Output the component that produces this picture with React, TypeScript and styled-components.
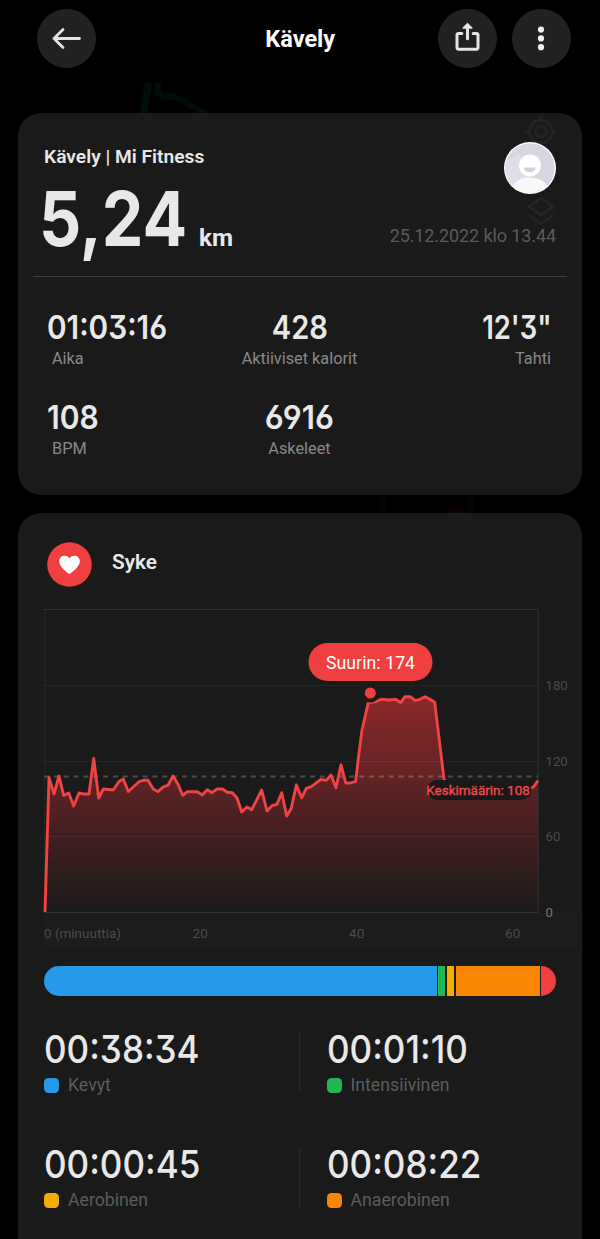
import React from "react";
import styled, { createGlobalStyle } from "styled-components";

const GlobalStyle = createGlobalStyle`
  * { box-sizing: border-box; }
  body { margin: 0; background: #000; font-family: Roboto, sans-serif; color: #e8e8e8; }
`;

const Screen = styled.div`
  position: relative;
  width: 600px;
  height: 1239px;
  overflow: hidden;
  background: #000;
`;

const MapTrace = styled.svg`
  position: absolute;
  inset: 0;
`;

const Header = styled.header`
  position: relative;
  height: 113px;
  padding: 9px 29.5px 0 37px;
  display: grid;
  grid-template-columns: 133px 1fr 133px;
  align-items: start;
`;

const HeaderActions = styled.div`
  display: flex;
  gap: 15px;
`;

const RoundButton = styled.button`
  width: 59px;
  height: 59px;
  padding: 0;
  border: 0;
  border-radius: 50%;
  background: #212121;
  display: block;
`;

const Title = styled.h1`
  margin: 0;
  padding-right: 7px;
  font-size: 23.5px;
  line-height: 60px;
  font-weight: 700;
  color: #fff;
  text-align: center;
`;

const Card = styled.section<{ $height: number }>`
  position: relative;
  margin: 0 18px 18px;
  height: ${(p) => p.$height}px;
  border-radius: 23px;
  background: #1a1a1a;
`;

const GhostControls = styled.svg`
  position: absolute;
  left: 505px;
  top: 0;
`;

const SummaryHead = styled.div`
  position: relative;
  display: flex;
  justify-content: space-between;
  height: 164px;
  margin: 0 15px;
  padding: 29px 11px 0;
  border-bottom: 1px solid #3a3a3a;
`;

const Source = styled.div`
  padding-top: 1px;
  font-size: 19.2px;
  line-height: 28px;
  font-weight: 600;
`;

const Distance = styled.div`
  display: flex;
  align-items: baseline;
  height: 90px;
  line-height: 94px;
  margin-left: -5px;
`;

const Digits = styled.span<{ $size: number; $weight: number; $stretch: number; $origin?: string }>`
  display: inline-block;
  font-family: Inter, sans-serif;
  font-feature-settings: "cv09", "cv03", "cv04";
  font-size: ${(p) => p.$size}px;
  font-weight: ${(p) => p.$weight};
  white-space: nowrap;
  transform: scaleX(${(p) => p.$stretch});
  transform-origin: ${(p) => p.$origin ?? "left"} center;
`;

const DistanceValue = styled.div`
  width: 160px;
`;

const Unit = styled.span`
  font-size: 24.3px;
  font-weight: 700;
`;

const Meta = styled.div`
  display: flex;
  flex-direction: column;
  align-items: flex-end;
  gap: 29px;
`;

const DateText = styled.div`
  font-size: 18px;
  line-height: 26px;
  letter-spacing: -0.1px;
  color: #5b5b5b;
`;

const Stats = styled.div`
  display: grid;
  grid-template-columns: 1fr 1fr 1fr;
  row-gap: 24px;
  padding: 30px 30px 0 29px;
`;

const Stat = styled.div<{ $align: string }>`
  height: 66px;
  text-align: ${(p) => p.$align};
  line-height: 40px;
`;

const StatLabel = styled.div<{ $inset: string }>`
  margin-top: -6px;
  padding: ${(p) => p.$inset};
  font-size: 16.3px;
  line-height: 22px;
  color: #898989;
  white-space: nowrap;
`;

const HeartHead = styled.div`
  display: flex;
  align-items: center;
  gap: 20px;
  padding: 29px 29px 0;
  height: 74px;
`;

const HeartBadge = styled.svg`
  display: block;
  flex: none;
`;

const SectionTitle = styled.h2`
  margin: 0 0 5px;
  font-size: 20.8px;
  font-weight: 600;
`;

const Chart = styled.svg`
  display: block;
  margin-top: 22px;
  font-family: Roboto, sans-serif;
`;

const ZoneBar = styled.div`
  display: flex;
  gap: 1.4px;
  height: 29.5px;
  margin: 18px 26px 0;
  border-radius: 15px;
  overflow: hidden;
`;

const ZoneSegment = styled.div<{ $color: string; $width: number }>`
  width: ${(p) => p.$width}px;
  background: ${(p) => p.$color};
`;

const Zones = styled.div`
  display: grid;
  grid-template-columns: 256px 1fr;
  row-gap: 49px;
  margin: 31.5px 26px 0;
`;

const Zone = styled.div<{ $divided: boolean }>`
  height: 66px;
  line-height: 44px;
  padding-left: ${(p) => (p.$divided ? 0 : 26.5)}px;
  background: ${(p) => (p.$divided ? "linear-gradient(#292929, #292929) right 5px / 1px 60px no-repeat" : "none")};
`;

const ZoneLabel = styled.div`
  display: flex;
  align-items: center;
  gap: 9px;
  height: 22px;
  margin-top: -6px;
  font-size: 17.7px;
  line-height: 22px;
  color: #5d5d5d;
`;

const Swatch = styled.span<{ $color: string }>`
  width: 15px;
  height: 15px;
  border-radius: 4.5px;
  background: ${(p) => p.$color};
`;

const stats = [
  { value: "01:03:16", label: "Aika", align: "left", stretch: 0.9 },
  { value: "428", label: "Aktiiviset kalorit", align: "center", stretch: 0.88 },
  { value: "12'3\"", label: "Tahti", align: "right", stretch: 0.83 },
  { value: "108", label: "BPM", align: "left", stretch: 0.91 },
  { value: "6916", label: "Askeleet", align: "center", stretch: 0.95 },
];

const labelInset: Record<string, string> = {
  left: "0 0 0 5px",
  center: "0",
  right: "0 1px 0 0",
};

const zones = [
  { value: "00:38:34", label: "Kevyt", color: "#2699e8" },
  { value: "00:01:10", label: "Intensiivinen", color: "#1fb855" },
  { value: "00:00:45", label: "Aerobinen", color: "#f2ad00" },
  { value: "00:08:22", label: "Anaerobinen", color: "#fa8500" },
];

const segments = [
  { color: "#2699e8", width: 392.6 },
  { color: "#1fb855", width: 7.4 },
  { color: "#f2ad00", width: 7.6 },
  { color: "#fa8500", width: 83.9 },
  { color: "#f03f40", width: 14.9 },
];

const pulse =
  "45,912 49,777.5 54,794 59,776 63.7,795.5 68.7,793 73.7,806 79,793 83.7,794 89,794 93.7,758.5 98.7,798 103.3,789 113.3,790 119,781.5 123.3,779 128.3,791.5 139,781.7 143.3,780.3 148,780.3 153.3,789 158,791.7 163.7,786.7 168,785.3 173,776 178,784.3 182.7,795.3 187.3,791.7 197.3,791.7 202.3,795 207.3,789.7 212,792.7 217,789 222.3,789 227.3,792.3 232.3,792.7 237,798 241.7,812 247,807 251.7,809.7 261.7,790 267,811 272,805.7 277,804.3 281.7,792.7 286.7,816 291.3,808.3 296.3,785 301.7,797.7 306.3,788.3 311.3,786.7 321,779.3 326.3,780.3 331,775 336,787.7 341,764.7 345.7,783 350.7,783 355.7,781.3 358.5,757 362,730 368.3,702.7 376,701.5 381,699.3 390,700 395.7,699.3 400.7,702.7 405,696.7 410.3,696.7 415.3,700.7 420,699.3 425,696.7 430,699.3 434.7,702.3 444,779 450,790 526,790 533.5,787 538,780.5";

function HeartRateChart() {
  return (
    <Chart width="564" height="339" viewBox="18 609 564 339">
      <defs>
        <linearGradient id="fill" gradientUnits="userSpaceOnUse" x1="0" y1="697" x2="0" y2="912">
          <stop offset="0" stopColor="#ee3338" stopOpacity="0.54" />
          <stop offset="1" stopColor="#ee3338" stopOpacity="0" />
        </linearGradient>
      </defs>
      <rect x="44" y="913" width="538" height="35" fill="#1c1c1c" />
      <polygon points={`${pulse} 538,912`} fill="url(#fill)" />
      <g stroke="#fff" strokeOpacity="0.05" strokeWidth="1">
        <path d="M44 685.5H538M44 761.5H538M44 836.5H538" />
        <path d="M44.5 609V912" />
      </g>
      <path d="M44 609.5H538.2V912.5H44" fill="none" stroke="#323232" strokeWidth="1" />
      <path d="M44 776.5H538" stroke="#fff" strokeOpacity="0.22" strokeWidth="1.8" strokeDasharray="5 4.85" />
      <polyline points={pulse} fill="none" stroke="#ee4444" strokeWidth="2.9" strokeLinejoin="round" />
      <circle cx="370.3" cy="693" r="9.5" fill="#1a1a1a" />
      <circle cx="370.3" cy="693" r="5.5" fill="#f03f40" />
      <rect x="308.5" y="643" width="124" height="38" rx="19" fill="#f03f40" />
      <text x="370.5" y="669" fontSize="17.6" fill="#fff" textAnchor="middle" textLength="89">Suurin: 174</text>
      <rect x="427" y="780" width="104.5" height="20" rx="10" fill="#1a1919" />
      <text x="426.3" y="795" fontSize="13.4" fill="#f04a4a" stroke="#f04a4a" strokeWidth="0.35" textLength="103.5" lengthAdjust="spacingAndGlyphs">Keskimäärin: 108</text>
      <g fontSize="13.2" fill="#4b4b4b">
        <text x="545.5" y="689.7">180</text>
        <text x="545.5" y="765.5">120</text>
        <text x="545.5" y="841">60</text>
        <text x="545.5" y="917" fill="#777">0</text>
        <g fontSize="13.6">
          <text x="44" y="937.5" textLength="77" lengthAdjust="spacingAndGlyphs">0 (minuuttia)</text>
          <text x="192.5" y="937.5">20</text>
          <text x="349" y="937.5">40</text>
          <text x="505" y="937.5">60</text>
        </g>
      </g>
    </Chart>
  );
}

export default function App() {
  return (
    <Screen>
      <GlobalStyle />
      <MapTrace width="600" height="1239" fill="none">
        <path d="M149 82L143 114" stroke="#010f0a" strokeWidth="7" />
        <path d="M158 83V94L180 99L206 114" stroke="#010d09" strokeWidth="6" />
        <path d="M383 494V514M471 494V514" stroke="#010504" strokeWidth="6" />
        <circle cx="456" cy="517" r="11" fill="#0d0202" />
      </MapTrace>
      <Header>
        <RoundButton aria-label="Takaisin">
          <svg width="59" height="59" fill="none" stroke="#e2e2e2" strokeWidth="2.8" strokeLinecap="round" strokeLinejoin="round">
            <path d="M42.5 29.5H17M26 20.5L17 29.5L26 38.5" />
          </svg>
        </RoundButton>
        <Title>Kävely</Title>
        <HeaderActions>
          <RoundButton aria-label="Jaa">
            <svg width="59" height="59" fill="none" stroke="#e5e5e5" strokeWidth="3" strokeLinecap="round" strokeLinejoin="round">
              <path d="M23.8 24.4H20.6Q19 24.4 19 26V38.6Q19 40.2 20.6 40.2H38.4Q40 40.2 40 38.6V26Q40 24.4 38.4 24.4H35.2M29.5 29.7V16.5" />
              <path d="M25.2 19L29.5 14.7L33.8 19Z" fill="#e5e5e5" strokeWidth="1.6" />
            </svg>
          </RoundButton>
          <RoundButton aria-label="Lisää">
            <svg width="59" height="59" fill="#efefef">
              <circle cx="29" cy="20.6" r="3.1" />
              <circle cx="29" cy="29.4" r="3.1" />
              <circle cx="29" cy="38.2" r="3.1" />
            </svg>
          </RoundButton>
        </HeaderActions>
      </Header>

      <Card $height={382}>
        <GhostControls width="50" height="120" fill="none" stroke="#242424" strokeWidth="2.6">
          <circle cx="18" cy="18.5" r="11.5" />
          <circle cx="18" cy="18.5" r="5.5" />
          <path d="M18 3V8M18 29V34M2.5 18.5H7M29 18.5H33.5" />
          <path d="M18 85L30 93.5L18 102L6 93.5ZM5 102L18 111L31 102" />
        </GhostControls>
        <SummaryHead>
          <div>
            <Source>Kävely | Mi Fitness</Source>
            <Distance>
              <DistanceValue>
                <Digits $size={76} $weight={650} $stretch={0.87}>5,24</Digits>
              </DistanceValue>
              <Unit>km</Unit>
            </Distance>
          </div>
          <Meta>
            <svg width="52" height="52" viewBox="0 0 52 52">
              <defs>
                <clipPath id="avatar"><circle cx="26" cy="26" r="25" /></clipPath>
              </defs>
              <circle cx="26" cy="26" r="26" fill="#fff" />
              <g clipPath="url(#avatar)">
                <circle cx="26" cy="26" r="24.8" fill="#d7d7e1" />
                <path d="M0 20L15 13L30 25L16 52H0Z" fill="#dfdfe7" />
                <ellipse cx="26" cy="50" rx="19" ry="14.5" fill="#f8f8f9" />
                <circle cx="26" cy="23.5" r="11" fill="#fff" />
                <path d="M19.8 25.5H31.6C31.2 28.8 29 30.2 25.7 30.2C22.4 30.2 20.2 28.8 19.8 25.5Z" fill="#d2d2dc" />
              </g>
            </svg>
            <DateText>25.12.2022 klo 13.44</DateText>
          </Meta>
        </SummaryHead>
        <Stats>
          {stats.map((s) => (
            <Stat key={s.label} $align={s.align}>
              <Digits $size={33} $weight={600} $stretch={s.stretch} $origin={s.align}>{s.value}</Digits>
              <StatLabel $inset={labelInset[s.align]}>{s.label}</StatLabel>
            </Stat>
          ))}
        </Stats>
      </Card>

      <Card $height={760}>
        <HeartHead>
          <HeartBadge width="45" height="45">
            <circle cx="22.5" cy="22.5" r="22.3" fill="#f03f40" />
            <path d="M22.5 32C20.8 31 12.2 25 12.2 19.2C12.2 13.6 19 11.8 22.5 16.2C26 11.8 32.8 13.6 32.8 19.2C32.8 25 24.2 31 22.5 32Z" fill="#fff" />
          </HeartBadge>
          <SectionTitle>Syke</SectionTitle>
        </HeartHead>
        <HeartRateChart />
        <ZoneBar>
          {segments.map((s) => (
            <ZoneSegment key={s.color} $color={s.color} $width={s.width} />
          ))}
        </ZoneBar>
        <Zones>
          {zones.map((z, i) => (
            <Zone key={z.label} $divided={i % 2 === 0}>
              <Digits $size={38.5} $weight={500} $stretch={0.91}>{z.value}</Digits>
              <ZoneLabel>
                <Swatch $color={z.color} />
                {z.label}
              </ZoneLabel>
            </Zone>
          ))}
        </Zones>
      </Card>
    </Screen>
  );
}
